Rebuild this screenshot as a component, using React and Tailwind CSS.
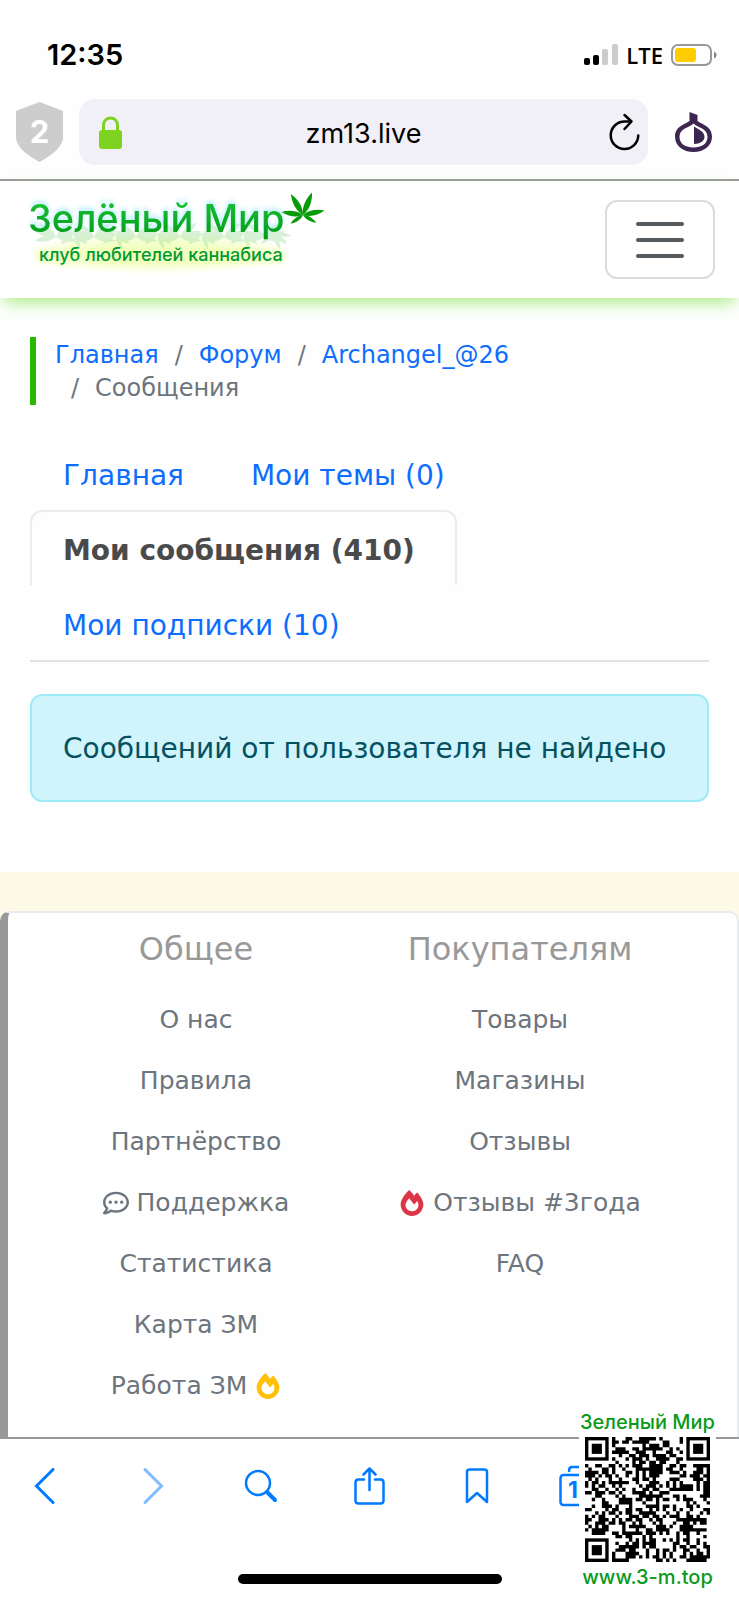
import clsx from 'clsx'
import { FaFireAlt, FaRegCommentDots } from 'react-icons/fa'

const tabs = [
  { label: 'Главная' },
  { label: 'Мои темы (0)' },
  { label: 'Мои сообщения (410)', active: true },
  { label: 'Мои подписки (10)' },
]

const general = [
  { label: 'О нас' },
  { label: 'Правила' },
  { label: 'Партнёрство' },
  { label: 'Поддержка', before: <FaRegCommentDots size={26} /> },
  { label: 'Статистика' },
  { label: 'Карта ЗМ' },
  { label: 'Работа ЗМ', after: <FaFireAlt size={26} className="text-[#ffc107]" /> },
]

const buyers = [
  { label: 'Товары' },
  { label: 'Магазины' },
  { label: 'Отзывы' },
  { label: 'Отзывы #3года', before: <FaFireAlt size={26} className="text-[#dc3545]" /> },
  { label: 'FAQ' },
]

// one leaflet pointing up, rotated around the stem
const LEAFLET = 'M0 0C-4 -7 -3 -15 0 -22C3 -15 4 -7 0 0Z'

const Leaf = ({ x, y, scale = 1, angles }) => (
  <g transform={`translate(${x} ${y}) scale(${scale})`}>
    {angles.map((a) => (
      <path key={a} d={LEAFLET} transform={`rotate(${a})`} />
    ))}
  </g>
)

const StatusBar = () => (
  <div className="flex h-[99px] items-center justify-between pr-[22px] pl-[47px] pt-[10px]">
    <span className="text-[29px] leading-8 font-semibold">12:35</span>
    <div className="flex items-center gap-2">
      <svg width="34" height="22" viewBox="0 0 34 22">
        <rect x="0" y="14" width="6" height="7" rx="2" />
        <rect x="9" y="11" width="6" height="10" rx="2" />
        <rect x="18" y="5" width="6" height="16" rx="2" fill="#ccc" />
        <rect x="28" y="0" width="6" height="21" rx="2" fill="#ccc" />
      </svg>
      <span className="font-[Open_Sans,sans-serif] text-[22px] leading-6 font-semibold">LTE</span>
      <svg width="46" height="22" viewBox="0 0 46 22">
        <rect x="1" y="1" width="39" height="20" rx="6" fill="none" stroke="#999" strokeWidth="2" />
        <rect x="4" y="4" width="21" height="14" rx="3" fill="#ffcc00" />
        <path d="M43 7.500C46.500 9 46.500 13 43 14.500Z" fill="#888" />
      </svg>
    </div>
  </div>
)

const AddressBar = () => (
  <div className="box-content flex h-[80px] items-start border-b-2 border-[#999] pr-[27px] pl-[16px]">
    <svg className="mt-[3px] shrink-0" width="47" height="60" viewBox="0 0 47 60">
      <path d="M23.500 0L47 9V35C47 44 38 52 23.500 60C9 52 0 44 0 35V9Z" fill="#cdcdcd" />
      <text x="23.500" y="41" textAnchor="middle" fontFamily="Inter, sans-serif" fontSize="31" fontWeight="700" fill="#fff">2</text>
    </svg>
    <div className="ml-4 flex h-[66px] flex-1 items-center rounded-[16px] bg-[#f1f0f6] pr-2 pl-5">
      <svg width="23" height="33" viewBox="0 0 23 33">
        <path d="M4.500 15V9.500C4.500 -0.500 18.500 -0.500 18.500 9.500V15" fill="none" stroke="#7ed321" strokeWidth="3" />
        <rect x="0" y="14" width="23" height="19" rx="3" fill="#7ed321" />
      </svg>
      <input
        aria-label="Адрес"
        defaultValue="zm13.live"
        className="min-w-0 flex-1 bg-transparent pt-1 pr-1 text-center text-[27px] leading-8 outline-none"
      />
      <button aria-label="Обновить">
        <svg width="31" height="38" viewBox="0 0 31 38" fill="none" stroke="#000" strokeWidth="2.500" strokeLinecap="round" strokeLinejoin="round">
          <path d="M29.250 22.500A13.750 13.750 0 1 1 15.500 8.500H22" />
          <path d="M15.500 2L22.500 8.500L15.500 16" />
        </svg>
      </button>
    </div>
    <button aria-label="Tor" className="mt-[13px] ml-[27px]">
      <svg width="37" height="40" viewBox="0 0 37 40">
        <path d="M14.500 0L22.500 3V9C26 12 37 14 37 24.500C37 34 29 40 18.500 40C8 40 0 34 0 24.500C0 14 11 12 14.500 9Z" fill="#3d2750" />
        <path d="M18.500 11.500C14 16 4.500 16 4.500 25C4.500 32 11 35.500 18.500 35.500C26 35.500 32.500 32 32.500 25C32.500 16 23 16 18.500 11.500Z" fill="#fff" />
        <path d="M19 14.500C23 17.500 29.500 19 29.500 25C29.500 29 25 32 19 32Z" fill="#3d2750" />
      </svg>
    </button>
  </div>
)

const Logo = () => (
  <a href="#" className="relative block h-[90px] w-[300px]">
    <svg className="absolute inset-0" width="300" height="90" viewBox="0 0 300 90">
      <defs>
        <radialGradient id="glow">
          <stop offset="0.500" stopColor="#eaff9a" stopOpacity="0.500" />
          <stop offset="1" stopColor="#eaff9a" stopOpacity="0" />
        </radialGradient>
      </defs>
      <ellipse cx="130" cy="68" rx="136" ry="22" fill="url(#glow)" />
      <g fill="#8fd98f" opacity="0.350">
        {[28, 66, 108, 152, 196, 236].map((x) => (
          <Leaf key={x} x={x} y={52} angles={[-100, -75, -50, 50, 75, 100]} />
        ))}
        {[46, 88, 130, 174, 216, 246].map((x) => (
          <Leaf key={x} x={x} y={48} scale={0.8} angles={[-130, -100, 100, 130, 160]} />
        ))}
      </g>
      <g fill="#079b07">
        <Leaf x={275} y={30} angles={[-82, 78]} />
        <Leaf x={275} y={30} scale={1.1} angles={[-30, 22]} />
        <Leaf x={275} y={30} scale={0.7} angles={[-125, 120]} />
      </g>
    </svg>
    <div className="relative font-[Inter,sans-serif] whitespace-nowrap">
      <div className="bg-linear-to-b from-[#20cf40] to-[#009a10] bg-clip-text pt-[10px] text-[38px] leading-[46px] font-medium text-transparent drop-shadow-[0_-3px_2px_#b5ecff]">
        Зелёный Мир
      </div>
      <div className="pt-[2px] pl-[11px] text-[18px] leading-6 font-medium text-[#009a2c] [text-shadow:0_0_3px_#fff,0_0_5px_#e4ff80,0_0_8px_#e4ff80]">
        клуб любителей каннабиса
      </div>
    </div>
  </a>
)

const Header = () => (
  <header className="flex h-[117px] items-start justify-between bg-white pr-6 pl-[28px] shadow-[0_8px_16px_-4px_#a4ec7c]">
    <div className="pt-1">
      <Logo />
    </div>
    <button aria-label="Меню" className="mt-[19px] flex h-[79px] w-[110px] items-center justify-center rounded-[12px] border-2 border-[#dcdcdc]">
      <svg width="48" height="36" viewBox="0 0 48 36" stroke="#555a5e" strokeWidth="4" strokeLinecap="round">
        <path d="M2 2H46M2 18H46M2 34H46" />
      </svg>
    </button>
  </header>
)

const Breadcrumb = () => (
  <nav aria-label="breadcrumb" className="border-l-[6px] border-[#28b800] pt-[2px] pr-8 pl-[19px]">
    <ol className="flex flex-wrap text-[24px] leading-[33px] text-[#6c757d]">
      <li><a href="#" className="text-[#0d6efd]">Главная</a></li>
      {['Форум', 'Archangel_@26'].map((label) => (
        <li key={label} className="pl-4 before:pr-4 before:content-['/']">
          <a href="#" className="text-[#0d6efd]">{label}</a>
        </li>
      ))}
      <li className="pl-4 before:pr-4 before:content-['/']">Сообщения</li>
    </ol>
  </nav>
)

const FooterColumn = ({ title, links }) => (
  <div className="text-center">
    <h5 className="pt-4 text-[32px] leading-[40px] text-[#999]">{title}</h5>
    <ul className="pt-5 text-[25px] text-[#6c757d]">
      {links.map(({ label, before, after }) => (
        <li key={label} className="h-[61px]">
          <a href="#" className="inline-flex items-center gap-2 leading-[61px] whitespace-nowrap">
            {before}
            {label}
            {after}
          </a>
        </li>
      ))}
    </ul>
  </div>
)

const QR_SIZE = 37

const inFinder = (x, y) =>
  (x < 8 && y < 8) || (x >= QR_SIZE - 8 && y < 8) || (x < 8 && y >= QR_SIZE - 8)

// decorative module pattern, seeded so every render looks the same
const qrPath = () => {
  let seed = 41
  let d = ''
  for (let y = 0; y < QR_SIZE; y++) {
    for (let x = 0; x < QR_SIZE; x++) {
      seed = (seed * 1103515245 + 12345) % 2147483648
      if (!inFinder(x, y) && seed / 2147483648 < 0.52) d += `M${x} ${y}h1v1h-1z`
    }
  }
  return d
}

const QrBadge = () => (
  <aside className="absolute right-[23px] bottom-0 flex w-[137px] flex-col items-center bg-white pb-2 font-[Inter,sans-serif] font-medium text-[#0a9a1c]">
    <span className="text-[20px] leading-[30px] whitespace-nowrap">Зеленый Мир</span>
    <svg width="125" height="125" viewBox="0 0 37 37">
      <path d={qrPath()} fill="#000" />
      {[[0, 0], [30, 0], [0, 30]].map(([x, y]) => (
        <g key={`${x}-${y}`}>
          <rect x={x + 0.5} y={y + 0.5} width="6" height="6" fill="none" stroke="#000" />
          <rect x={x + 2} y={y + 2} width="3" height="3" />
        </g>
      ))}
    </svg>
    <span className="text-[20px] leading-[30px]">www.3-m.top</span>
  </aside>
)

const Toolbar = () => (
  <nav className="relative flex h-[163px] flex-col justify-between border-t-2 border-[#999] bg-white pb-4">
    <div className="flex h-[94px] items-center gap-[72px] pl-[27px] text-[#007aff]">
      <button aria-label="Назад">
        <svg width="36" height="36" viewBox="0 0 36 36" fill="none" stroke="currentColor" strokeWidth="3" strokeLinecap="round">
          <path d="M26 1.500L9.500 18L26 34.500" />
        </svg>
      </button>
      <button aria-label="Вперёд" className="text-[#80bcff]" disabled>
        <svg width="36" height="36" viewBox="0 0 36 36" fill="none" stroke="currentColor" strokeWidth="3" strokeLinecap="round">
          <path d="M10 1.500L26.500 18L10 34.500" />
        </svg>
      </button>
      <button aria-label="Поиск">
        <svg width="36" height="36" viewBox="0 0 36 36" fill="none" stroke="currentColor" strokeLinecap="round">
          <circle cx="15" cy="15" r="12" strokeWidth="2.500" />
          <path d="M24 24L32 32" strokeWidth="4" />
        </svg>
      </button>
      <button aria-label="Поделиться">
        <svg width="36" height="38" viewBox="0 0 36 38" fill="none" stroke="currentColor" strokeWidth="2.500" strokeLinecap="round" strokeLinejoin="round">
          <path d="M13 12.500H7.500Q4.500 12.500 4.500 15.500V33.500Q4.500 36.500 7.500 36.500H29.500Q32.500 36.500 32.500 33.500V15.500Q32.500 12.500 29.500 12.500H24" />
          <path d="M18.500 23V1.500M12.500 7.500L18.500 1.500L24.500 7.500" />
        </svg>
      </button>
      <button aria-label="Закладки">
        <svg width="36" height="36" viewBox="0 0 36 36" fill="none" stroke="currentColor" strokeWidth="2.500" strokeLinejoin="round">
          <path d="M8 34V4Q8 1.500 10.500 1.500H25.500Q28 1.500 28 4V34L18 25Z" />
        </svg>
      </button>
      <button aria-label="Вкладки" className="-ml-2">
        <svg width="40" height="42" viewBox="0 0 40 42" fill="none" stroke="currentColor" strokeWidth="2.500" strokeLinecap="round">
          <rect x="1.500" y="10" width="28" height="30" rx="3" />
          <path d="M10 6Q10 2 13 2H35Q38 2 38 5V27Q38 30 35 30" />
          <text x="14" y="33" textAnchor="middle" fontFamily="Inter, sans-serif" fontSize="23" fontWeight="700" fill="currentColor" stroke="none">1</text>
        </svg>
      </button>
    </div>
    <div className="mx-auto h-[10px] w-[264px] rounded-full bg-black" />
    <QrBadge />
  </nav>
)

export default function App() {
  return (
    <div className="flex min-h-screen flex-col bg-[#fefefe] font-[Inter,sans-serif] text-black">
      <StatusBar />
      <AddressBar />

      <div className="flex flex-1 flex-col font-[DejaVu_Sans,sans-serif]">
        <Header />

        <main className="px-[30px] pt-[39px] pb-[70px]">
          <Breadcrumb />

          <ul className="mt-[30px] flex flex-wrap border-b-2 border-[#dee2e6] text-[28px] leading-[41px]">
            {tabs.map(({ label, active }) => (
              <li key={label}>
                <a
                  href="#"
                  className={clsx(
                    'block rounded-t-[12px] border-2 border-b-0 pt-[18px] pb-[14px] pl-[31px]',
                    active
                      ? 'border-[#e9ecef] bg-[#fefefe] pr-10 font-bold text-[#4a4a4a]'
                      : 'border-transparent pr-8 text-[#0d6efd]',
                  )}
                >
                  {label}
                </a>
              </li>
            ))}
          </ul>

          <div role="alert" className="mt-8 rounded-[12px] border-2 border-[#9eeaf9] bg-[#cff4fc] pt-8 pr-6 pb-[31px] pl-[31px] text-[28px] leading-[41px] text-[#055160]">
            Сообщений от пользователя не найдено
          </div>
        </main>

        <footer className="flex flex-1 flex-col bg-[#fefae8] pt-[39px]">
          <div className="grid flex-1 grid-cols-2 items-start rounded-t-[10px] border-t-2 border-r-2 border-l-8 border-t-[#e9ecef] border-r-[#e9ecef] border-l-[#999] bg-[#fefefe] pr-[55px] pl-[26px]">
            <FooterColumn title="Общее" links={general} />
            <FooterColumn title="Покупателям" links={buyers} />
          </div>
        </footer>
      </div>

      <Toolbar />
    </div>
  )
}
